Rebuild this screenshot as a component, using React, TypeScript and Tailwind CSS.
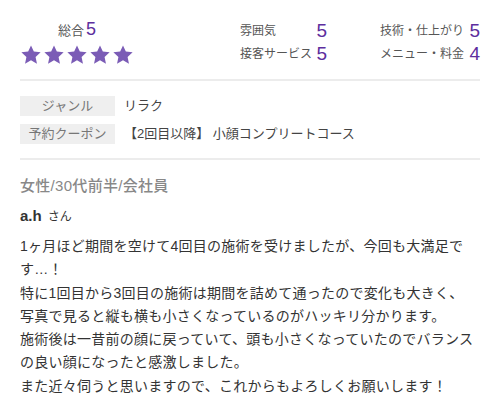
import React from "react";

const font = { fontFamily: '"Liberation Sans", "Noto Sans CJK JP", sans-serif' };

function Star() {
  return (
    <svg width="22" height="22" viewBox="0 0 24 24">
      <polygon
        points="12,1.5 15.1,8.3 22.5,9.1 17,14.1 18.5,21.5 12,17.8 5.5,21.5 7,14.1 1.5,9.1 8.9,8.3"
        fill="#7b5cb6"
      />
    </svg>
  );
}

function Score({ label, value }: { label: string; value: number }) {
  return (
    <div className="flex h-[23px] items-center justify-between whitespace-nowrap">
      <span className="text-[12px] text-[#555]">{label}</span>
      <span className="text-[19px] leading-none text-[#5d2e9e]">{value}</span>
    </div>
  );
}

function Info({ label, value }: { label: string; value: string }) {
  return (
    <div className="flex items-center">
      <div className="flex h-[20px] w-[95px] items-center justify-center bg-[#efefef] text-[13px] text-[#777]">
        {label}
      </div>
      <div className="ml-[9px] text-[13px] text-[#444]">{value}</div>
    </div>
  );
}

export default function App() {
  return (
    <div className="h-[400px] w-[500px] overflow-hidden bg-white px-5" style={font}>

      {/* ratings */}

      <div className="flex h-[79px] pt-[20px]">
        <div className="flex w-[114px] flex-col items-center">
          <div className="flex items-baseline text-[13px] text-[#555]">
            総合
            <span className="ml-[2px] text-[18px] leading-none text-[#5d2e9e]">5</span>
          </div>
          <div className="mt-[3px] flex gap-[1px]">
            <Star />
            <Star />
            <Star />
            <Star />
            <Star />
          </div>
        </div>

        <div className="ml-auto -mt-[1px] grid w-[240px] grid-cols-[87px_1fr] gap-x-[53px] content-start">
          <Score label="雰囲気" value={5} />
          <Score label="技術・仕上がり" value={5} />
          <Score label="接客サービス" value={5} />
          <Score label="メニュー・料金" value={4} />
        </div>
      </div>

      <div className="h-[2px] bg-[#ececec]" />

      {/* info */}

      <div className="flex h-[77px] flex-col gap-[8px] pt-[15px]">
        <Info label="ジャンル" value="リラク" />
        <Info label="予約クーポン" value="【2回目以降】 小顔コンプリートコース" />
      </div>

      <div className="h-[2px] bg-[#ececec]" />

      {/* review */}

      <p className="mt-[15px] text-[15px] font-medium tracking-[0.3px] text-[#888]">女性/30代前半/会社員</p>

      <p className="mt-[7px] flex items-baseline text-[#333]">
        <span className="text-[15px] font-bold">a.h</span>
        <span className="ml-[6px] text-[12px]">さん</span>
      </p>

      <p className="mt-[8px] text-[14px] leading-[23.3px] tracking-[0.25px] text-[#333]">
        1ヶ月ほど期間を空けて4回目の施術を受けましたが、今回も大満足です…！
        <br />
        特に1回目から3回目の施術は期間を詰めて通ったので変化も大きく、
        <br />
        写真で見ると縦も横も小さくなっているのがハッキリ分かります。
        <br />
        施術後は一昔前の顔に戻っていて、頭も小さくなっていたのでバランスの良い顔になったと感激しました。
        <br />
        また近々伺うと思いますので、これからもよろしくお願いします！
      </p>

    </div>
  );
}
